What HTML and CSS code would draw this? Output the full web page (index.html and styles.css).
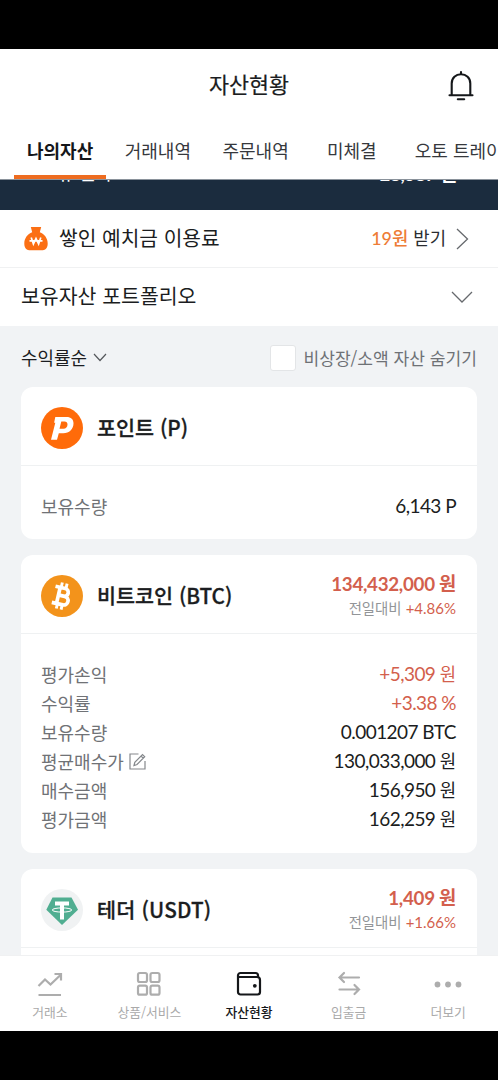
FILE: index.html
```html
<!DOCTYPE html>
<html lang="ko">
<head>
<meta charset="utf-8">
<title>자산현황</title>
<link rel="stylesheet" href="styles.css">
</head>
<body>
<div class="phone">
  <header class="header">
    <h1 class="title">자산현황</h1>
    <svg class="bell" width="26" height="32" viewBox="0 0 26 32" fill="none" stroke="#15171a" stroke-width="2.100" stroke-linecap="round">
      <path d="M3.700 25V13.500C3.700 8 7.800 4.300 13 4.300S22.300 8 22.300 13.500V25M1.500 25.200H24.500M13 2v2M9.800 29.300H16.200"/>
    </svg>
  </header>
  <nav class="tabs">
    <span class="tab tab-active">나의자산</span>
    <span class="tab">거래내역</span>
    <span class="tab">주문내역</span>
    <span class="tab">미체결</span>
    <span class="tab">오토 트레이딩</span>
  </nav>
  <div class="summary">
    <div class="summary-row"><span>보유 원화</span><b class="num">28,587 원</b></div>
  </div>
  <div class="strip interest">
    <svg class="bag" width="24" height="25" viewBox="0 0 24 25">
      <path d="M6.800 1h10.400l-1.400 5.300C20.500 8 23.700 12.500 23.700 17.500c0 4.800-2.300 6.800-6.500 6.800H6.800C2.600 24.300.3 22.300.3 17.500.3 12.500 3.500 8 8.200 6.300z" fill="#fb6f14"/>
      <path d="M7.200 11.500l2.200 6.500L12 12.500l2.600 5.500 2.200-6.500M5.500 14.800h13" fill="none" stroke="#fff" stroke-width="1.700"/>
    </svg>
    <span class="strip-title">쌓인 예치금 이용료</span>
    <span class="reward"><b>19원</b> 받기</span>
    <svg class="go" width="13" height="24" viewBox="0 0 13 24" fill="none" stroke="#66696d" stroke-width="1.300"><path d="M1 2l10.500 10L1 22"/></svg>
  </div>
  <div class="strip portfolio">
    <span class="strip-title">보유자산 포트폴리오</span>
    <svg width="22" height="12" viewBox="0 0 22 12" fill="none" stroke="#66696d" stroke-width="1.300"><path d="M1 1l10 10L21 1"/></svg>
  </div>
  <main class="list">
    <div class="filter">
      <span class="sort">수익률순</span>
      <svg class="sort-arrow" width="14" height="9" viewBox="0 0 14 9" fill="none" stroke="#55585c" stroke-width="1.200"><path d="M1 1l6 6.500L13 1"/></svg>
      <span class="checkbox"></span>
      <span class="hide-label">비상장/소액 자산 숨기기</span>
    </div>

    <section class="card card-point">
      <div class="card-head">
        <svg class="coin" width="42" height="42" viewBox="0 0 42 42">
          <circle cx="21" cy="21" r="21" fill="#ff6b0a"/>
          <path fill-rule="evenodd" d="M14.300 10H25.500c4.600 0 7 2.400 7 6.300 0 6-4.300 10-10.200 10h-4.500l-1.800 6.400H10L14.300 15.800h-1.200zM20.300 14.600l-1.800 7.200h4c2.400 0 4-1.700 4-4.200 0-2-1.100-3-3-3z" fill="#fff"/>
        </svg>
        <h2 class="name">포인트 (P)</h2>
      </div>
      <dl class="rows">
        <div class="row"><dt>보유수량</dt><dd class="num">6,143 P</dd></div>
      </dl>
    </section>

    <section class="card card-btc">
      <div class="card-head">
        <svg class="coin" width="42" height="42" viewBox="0 0 42 42">
          <circle cx="21" cy="21" r="21" fill="#f3931b"/>
          <g transform="rotate(13 21 21)" fill="none" stroke="#fff">
            <path d="M17.300 13v17M12.500 13h10a3.900 3.900 0 0 1 0 7.800H17M22.500 20.800h1.200a4.300 4.300 0 0 1 0 8.700H12.500" stroke-width="3.700"/>
            <path d="M18.300 7.800V13M23.200 7.800V13M18.300 29v5.500M23.200 29v5.500" stroke-width="2.900"/>
          </g>
        </svg>
        <h2 class="name">비트코인 (BTC)</h2>
        <div class="quote">
          <div class="price num">134,432,000 원</div>
          <div class="change">전일대비 <span class="num">+4.86%</span></div>
        </div>
      </div>
      <dl class="rows">
        <div class="row"><dt>평가손익</dt><dd class="num up">+5,309 <i>원</i></dd></div>
        <div class="row"><dt>수익률</dt><dd class="num up">+3.38 %</dd></div>
        <div class="row"><dt>보유수량</dt><dd class="num">0.001207 BTC</dd></div>
        <div class="row"><dt>평균매수가
          <svg class="edit" width="17" height="17" viewBox="0 0 17 17" fill="none" stroke="#85888c" stroke-width="1.200"><path d="M9.500 1H1v15h15V8M5 12.500l.8-3.200L13.500 1.500l2.200 2.200L8 11.500zM12 3l2.200 2.200"/></svg>
        </dt><dd class="num">130,033,000 <i>원</i></dd></div>
        <div class="row"><dt>매수금액</dt><dd class="num">156,950 <i>원</i></dd></div>
        <div class="row"><dt>평가금액</dt><dd class="num">162,259 <i>원</i></dd></div>
      </dl>
    </section>

    <section class="card card-usdt">
      <div class="card-head">
        <svg class="coin" width="42" height="42" viewBox="0 0 42 42">
          <circle cx="21" cy="21" r="21" fill="#f0f2f3"/>
          <path d="M11.500 8.500h19L37 20.700 21 36 5.300 20.700z" fill="#50ae91"/>
          <path d="M14 12.500h14v4h-5v14h-4v-14h-5z" fill="#fff"/>
          <ellipse cx="21" cy="21" rx="9.800" ry="2.100" fill="none" stroke="#fff" stroke-width="1"/>
        </svg>
        <h2 class="name name-usdt">테더 (USDT)</h2>
        <div class="quote">
          <div class="price num">1,409 원</div>
          <div class="change">전일대비 <span class="num">+1.66%</span></div>
        </div>
      </div>
    </section>
  </main>
  <nav class="bottom">
    <div class="item">
      <svg width="28" height="28" viewBox="0 0 28 28" fill="none" stroke="#adadad" stroke-width="2.200"><path d="M2.500 16l6.500-6.500 5.500 5L24.500 5M18.500 4h6.500v6.500M2.500 25H25"/></svg>
      <span>거래소</span>
    </div>
    <div class="item">
      <svg width="28" height="28" viewBox="0 0 28 28" fill="none" stroke="#adadad" stroke-width="2.200"><rect x="3" y="3" width="9" height="9" rx="1.800"/><rect x="15.500" y="3" width="9" height="9" rx="1.800"/><rect x="3" y="15.700" width="9" height="9" rx="1.800"/><rect x="15.500" y="15.700" width="9" height="9" rx="1.800"/></svg>
      <span>상품/서비스</span>
    </div>
    <div class="item item-active">
      <svg width="28" height="28" viewBox="0 0 28 28" fill="none" stroke="#15171a" stroke-width="2.200"><path d="M3 7h19a3 3 0 0 1 3 3v12a2.500 2.500 0 0 1-2.500 2.500h-17A2.500 2.500 0 0 1 3 22V5.500A2.500 2.500 0 0 1 5.500 3h15A2.500 2.500 0 0 1 23 5.500v2"/><circle cx="19.800" cy="15.800" r="1.900" fill="#15171a" stroke="none"/></svg>
      <span>자산현황</span>
    </div>
    <div class="item">
      <svg width="28" height="28" viewBox="0 0 28 28" fill="none" stroke="#adadad" stroke-width="2.200" stroke-linecap="round"><path d="M24 7.500H4.500M9 3L4.500 7.500 9 12M4.500 19.500H24M19.500 15l4.500 4.500-4.500 4.500"/></svg>
      <span>입출금</span>
    </div>
    <div class="item">
      <svg width="28" height="28" viewBox="0 0 28 28" fill="#adadad"><circle cx="3.500" cy="14.500" r="2.900"/><circle cx="14" cy="14.500" r="2.900"/><circle cx="24.500" cy="14.500" r="2.900"/></svg>
      <span>더보기</span>
    </div>
  </nav>
</div>
</body>
</html>
```
FILE: styles.css
```css
* { box-sizing: border-box; margin: 0; padding: 0; }
body {
  width: 498px;
  height: 1080px;
  background: #000;
  color: #1b1d21;
  font-family: "Noto Sans CJK KR", sans-serif;
  overflow: hidden;
}
svg { display: block; flex: none; }
span, h1, h2, dt, dd, div { white-space: nowrap; }
.phone {
  width: 498px;
  height: 982px;
  margin-top: 49px;
  background: #fff;
  display: flex;
  flex-direction: column;
  overflow: hidden;
}
.num { font-family: Lato, "Noto Sans CJK KR", sans-serif; }

.header {
  flex: none;
  height: 72px;
  display: grid;
  grid-template-columns: 1fr auto 1fr;
  align-items: center;
  padding: 0 24px;
}
.title {
  grid-column: 2;
  font-size: 21.800px;
  font-weight: 400;
  line-height: 32px;
  padding-bottom: 2px;
  -webkit-text-stroke: 0.200px currentColor;
}
.bell { justify-self: end; margin-top: 2px; }
.tabs {
  flex: none;
  height: 58px;
  display: flex;
  gap: 5.500px;
  padding-left: 14px;
}
.tab {
  flex: none;
  min-width: 89px;
  padding: 0 13px;
  font-size: 18px;
  line-height: 58px;
  text-align: center;
  color: #36383c;
}
.tab-active { font-weight: 700; color: #15171a; border-bottom: 4px solid #ee6c20; }

.summary {
  flex: none;
  height: 31px;
  background: #1b2c3e;
  border-top: 1px solid #8a929b;
  overflow: hidden;
}
.summary-row {
  display: flex;
  align-items: flex-start;
  justify-content: space-between;
  margin-top: -19px;
  padding: 0 41px;
  font-size: 18px;
  line-height: 22px;
  color: #fff;
}
.summary-row .num { padding-top: 2px; }

.strip {
  flex: none;
  display: flex;
  align-items: center;
  padding: 0 25px 0 21px;
}
.strip-title { line-height: 30px; margin-right: auto; padding-bottom: 3px; }
.interest { height: 58px; border-bottom: 1px solid #f0f1f2; padding-left: 24px; }
.interest .strip-title { font-size: 20.300px; }
.bag { margin-right: 11px; }
.reward { font-size: 17.800px; color: #2b2d31; padding-bottom: 3px; }
.reward b { font-family: Lato, "Noto Sans CJK KR", sans-serif; font-weight: 500; color: #ee7c36; }
.go { margin: 0 4px 0 10px; }
.portfolio { height: 58px; }
.portfolio .strip-title { font-size: 20.500px; padding-bottom: 4px; }

.list {
  flex: 1;
  min-height: 0;
  overflow: hidden;
  background: #f1f3f5;
  padding: 0 21px;
}
.filter { height: 61px; display: flex; align-items: center; padding-top: 2px; }
.sort { font-size: 17.900px; padding-bottom: 2px; }
.sort-arrow { margin-left: 6px; }
.checkbox {
  width: 26px;
  height: 26px;
  margin-left: auto;
  background: #fff;
  border: 1px solid #e3e5e7;
  border-radius: 3px;
}
.hide-label { margin-left: 7px; font-size: 17.100px; color: #6e7175; }

.card { background: #fff; border-radius: 12px; margin-bottom: 16px; }
.card-point { height: 152px; }
.card-btc { height: 298px; }
.card-usdt { height: 298px; }
.card-head {
  height: 79px;
  display: flex;
  align-items: center;
  padding: 3px 21px 0 20px;
  border-bottom: 1px solid #eff1f2;
}
.coin { margin-right: 14px; }
.name {
  font-size: 20.700px;
  font-weight: 500;
  line-height: 30px;
  padding-bottom: 2px;
  -webkit-text-stroke: 0.300px currentColor;
}
.name-usdt { letter-spacing: 0.200px; }
.quote { margin-left: auto; text-align: right; color: #d35f4d; }
.price { font-size: 18.800px; font-weight: 700; line-height: 25px; letter-spacing: -0.300px; }
.change { font-size: 14.400px; line-height: 24px; color: #929598; padding-bottom: 1px; }
.change .num { color: #d35f4d; font-size: 15px; }
.rows { padding: 26px 21px 0 20px; }
.row { display: flex; justify-content: space-between; height: 29.100px; line-height: 29.100px; font-size: 18px; }
.row dt { display: flex; align-items: center; color: #707276; padding-bottom: 1px; }
.edit { margin-left: 5px; }
.row dd { color: #1b1d21; font-size: 19px; letter-spacing: -0.550px; margin-top: -1px; }
.row dd i { font-style: normal; font-size: 17.800px; letter-spacing: 0; }
.row dd.up { color: #d35f4d; }

.bottom {
  flex: none;
  height: 76px;
  display: grid;
  grid-template-columns: repeat(5, 1fr);
  border-top: 1px solid #f0f1f2;
}
.item {
  display: flex;
  flex-direction: column;
  align-items: center;
  padding-top: 14px;
  font-size: 12.800px;
  line-height: 18px;
  color: #aaa;
}
.item span { margin-top: 5px; }
.item-active { color: #15171a; font-weight: 500; }
```
